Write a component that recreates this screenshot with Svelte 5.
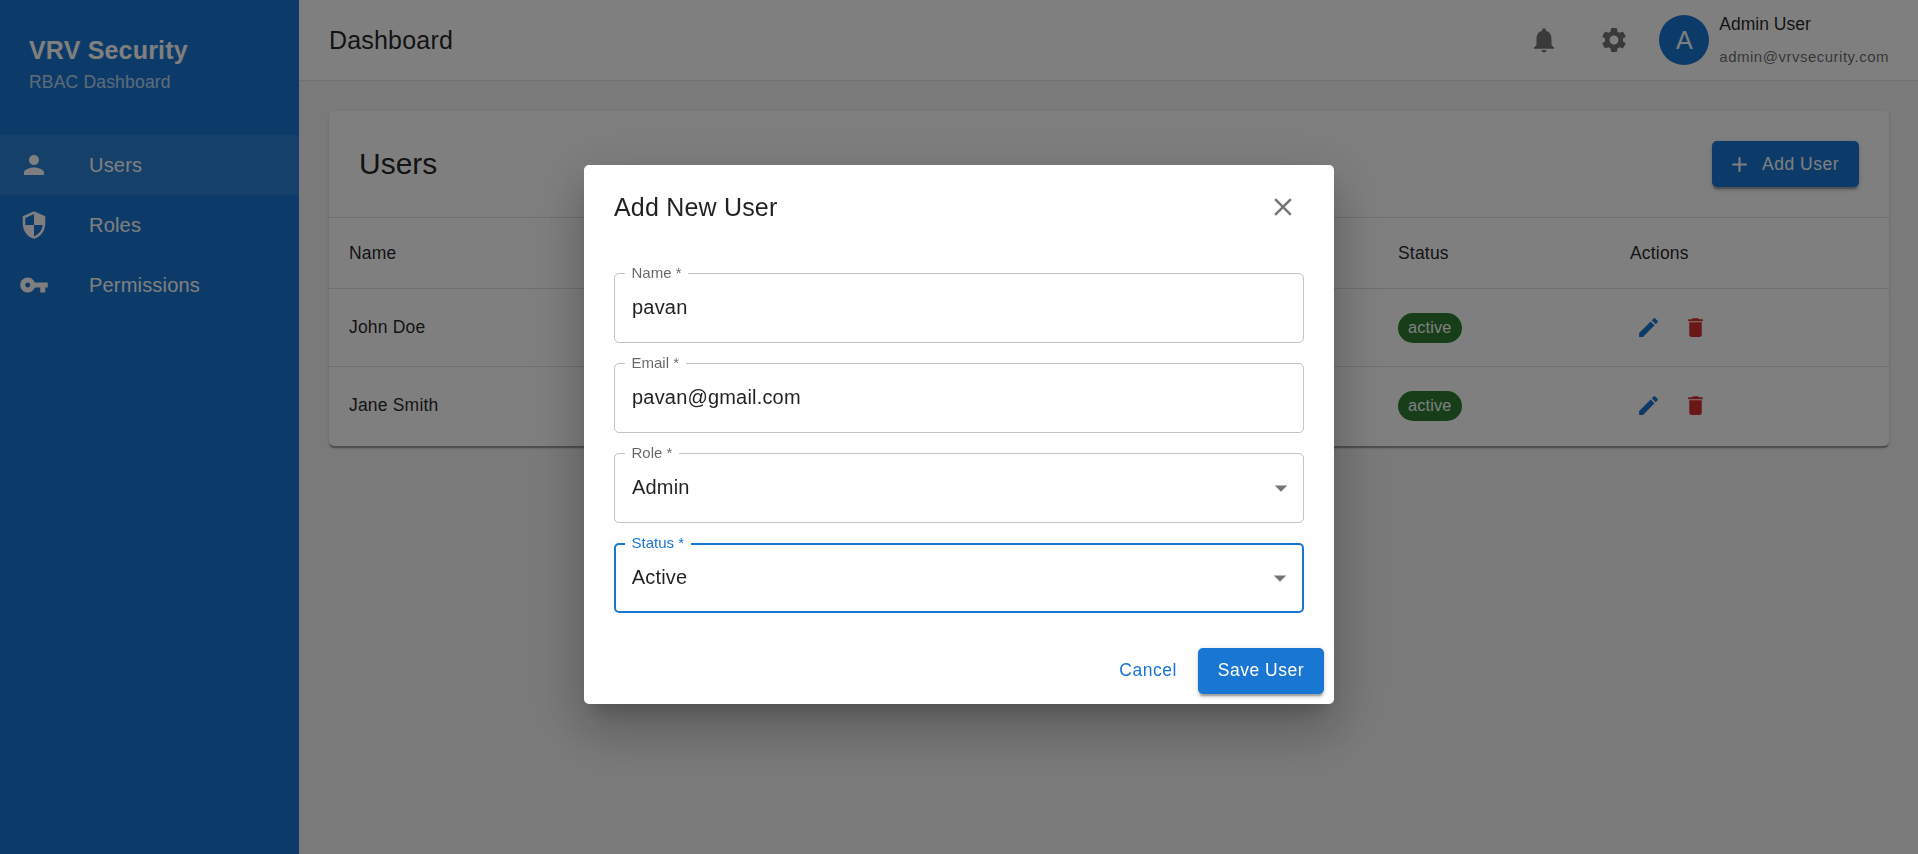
<script>
  const nav = [
    { label: 'Users', d: 'M12 12c2.21 0 4-1.79 4-4s-1.79-4-4-4-4 1.79-4 4 1.79 4 4 4zm0 2c-2.67 0-8 1.34-8 4v2h16v-2c0-2.66-5.33-4-8-4z', active: true },
    { label: 'Roles', d: 'M12 1L3 5v6c0 5.55 3.84 10.74 9 12 5.16-1.26 9-6.45 9-12V5l-9-4zm0 10.99h7c-.53 4.12-3.28 7.79-7 8.94V12H5V6.3l7-3.11v8.8z' },
    { label: 'Permissions', d: 'M12.65 10C11.83 7.67 9.61 6 7 6c-3.31 0-6 2.69-6 6s2.69 6 6 6c2.61 0 4.83-1.67 5.65-4H17v4h4v-4h2v-4H12.65zM7 14c-1.1 0-2-.9-2-2s.9-2 2-2 2 .9 2 2-.9 2-2 2z' }
  ];

  const users = [
    { name: 'John Doe', email: 'john@example.com', role: 'Admin', status: 'active' },
    { name: 'Jane Smith', email: 'jane@example.com', role: 'Editor', status: 'active' }
  ];

  const fields = [
    { label: 'Name *', value: 'pavan' },
    { label: 'Email *', value: 'pavan@gmail.com' },
    { label: 'Role *', value: 'Admin', select: true },
    { label: 'Status *', value: 'Active', select: true, focused: true }
  ];

  const icons = {
    bell: 'M12 22c1.1 0 2-.9 2-2h-4c0 1.1.89 2 2 2zm6-6v-5c0-3.07-1.64-5.64-4.5-6.32V4c0-.83-.67-1.5-1.5-1.5s-1.5.67-1.5 1.5v.68C7.63 5.36 6 7.92 6 11v5l-2 2v1h16v-1l-2-2z',
    gear: 'M19.14 12.94c.04-.3.06-.61.06-.94 0-.32-.02-.64-.07-.94l2.03-1.58c.18-.14.23-.41.12-.61l-1.92-3.32c-.12-.22-.37-.29-.59-.22l-2.39.96c-.5-.38-1.03-.7-1.62-.94l-.36-2.54c-.04-.24-.24-.41-.48-.41h-3.84c-.24 0-.43.17-.47.41l-.36 2.54c-.59.24-1.13.57-1.62.94l-2.39-.96c-.22-.08-.47 0-.59.22L2.74 8.87c-.12.21-.08.47.12.61l2.03 1.58c-.05.3-.09.63-.09.94s.02.64.07.94l-2.03 1.58c-.18.14-.23.41-.12.61l1.92 3.32c.12.22.37.29.59.22l2.39-.96c.5.38 1.03.7 1.62.94l.36 2.54c.05.24.24.41.48.41h3.84c.24 0 .44-.17.47-.41l.36-2.54c.59-.24 1.13-.56 1.62-.94l2.39.96c.22.08.47 0 .59-.22l1.92-3.32c.12-.22.07-.47-.12-.61l-2.01-1.58zM12 15.6c-1.98 0-3.6-1.62-3.6-3.6s1.62-3.6 3.6-3.6 3.6 1.62 3.6 3.6-1.62 3.6-3.6 3.6z',
    add: 'M19 13h-6v6h-2v-6H5v-2h6V5h2v6h6v2z',
    edit: 'M3 17.25V21h3.75L17.81 9.94l-3.75-3.75L3 17.25zM20.71 7.04c.39-.39.39-1.02 0-1.41l-2.34-2.34a.9959.9959 0 0 0-1.41 0l-1.83 1.83 3.75 3.75 1.83-1.83z',
    trash: 'M6 19c0 1.1.9 2 2 2h8c1.1 0 2-.9 2-2V7H6v12zM19 4h-3.5l-1-1h-5l-1 1H5v2h14V4z',
    close: 'M19 6.41 17.59 5 12 10.59 6.41 5 5 6.41 10.59 12 5 17.59 6.41 19 12 13.41 17.59 19 19 17.59 13.41 12z',
    arrow: 'M7 10l5 5 5-5z'
  };
</script>

<div class="app">
  <aside class="sidebar">
    <div class="brand">
      <div class="brand-name">VRV Security</div>
      <div class="brand-sub">RBAC Dashboard</div>
    </div>
    <nav class="nav">
      {#each nav as item}
        <div class="nav-item" class:active={item.active}>
          <span class="nav-icon"><svg viewBox="0 0 24 24" width="30" height="30"><path d={item.d} /></svg></span>
          <span>{item.label}</span>
        </div>
      {/each}
    </nav>
  </aside>

  <div class="main">
    <header class="topbar">
      <div class="page-title">Dashboard</div>
      <div class="top-actions">
        <button class="icon-btn"><svg viewBox="0 0 24 24" width="30" height="30"><path d={icons.bell} /></svg></button>
        <button class="icon-btn"><svg viewBox="0 0 24 24" width="30" height="30"><path d={icons.gear} /></svg></button>
        <div class="account">
          <div class="avatar">A</div>
          <div class="account-text">
            <div class="account-name">Admin User</div>
            <div class="account-mail">admin@vrvsecurity.com</div>
          </div>
        </div>
      </div>
    </header>

    <main class="content">
      <section class="card">
        <div class="card-head">
          <h2>Users</h2>
          <button class="btn primary add">
            <svg viewBox="0 0 24 24" width="25" height="25"><path d={icons.add} /></svg>
            Add User
          </button>
        </div>
        <table>
          <colgroup>
            <col class="c-name" /><col class="c-email" /><col class="c-role" /><col class="c-status" /><col />
          </colgroup>
          <thead>
            <tr><th>Name</th><th>Email</th><th>Role</th><th>Status</th><th>Actions</th></tr>
          </thead>
          <tbody>
            {#each users as u}
              <tr>
                <td>{u.name}</td>
                <td>{u.email}</td>
                <td>{u.role}</td>
                <td><span class="chip">{u.status}</span></td>
                <td>
                  <div class="row-actions">
                    <button class="row-btn edit"><svg viewBox="0 0 24 24" width="25" height="25"><path d={icons.edit} /></svg></button>
                    <button class="row-btn trash"><svg viewBox="0 0 24 24" width="25" height="25"><path d={icons.trash} /></svg></button>
                  </div>
                </td>
              </tr>
            {/each}
          </tbody>
        </table>
      </section>
    </main>
  </div>
</div>

<div class="backdrop">
  <div class="dialog">
    <div class="dialog-head">
      <div class="dialog-title">Add New User</div>
      <button class="close"><svg viewBox="0 0 24 24" width="30" height="30"><path d={icons.close} /></svg></button>
    </div>
    <div class="form">
      {#each fields as f}
        <div class="field" class:focused={f.focused}>
          <span class="field-label">{f.label}</span>
          <span class="field-value">{f.value}</span>
          {#if f.select}
            <svg class="caret" viewBox="0 0 24 24" width="30" height="30"><path d={icons.arrow} /></svg>
          {/if}
        </div>
      {/each}
    </div>
    <div class="dialog-actions">
      <button class="btn text">Cancel</button>
      <button class="btn primary">Save User</button>
    </div>
  </div>
</div>

<style>
  :global(body) {
    margin: 0;
    font-family: "Liberation Sans", Arial, sans-serif;
    color: rgba(0, 0, 0, 0.87);
    overflow: hidden;
  }

  button {
    font-family: inherit;
    border: none;
    background: none;
    padding: 0;
  }

  svg {
    display: block;
    fill: currentColor;
  }

  .app {
    display: flex;
    height: 854px;
    background: #f5f5f5;
  }

  /* sidebar */
  .sidebar {
    flex: 0 0 299px;
    background: #1976d2;
    color: #fff;
  }

  .brand {
    padding: 30px 30px 30px 29px;
  }

  .brand-name {
    font-size: 25px;
    font-weight: 700;
    line-height: 40px;
    letter-spacing: 0.19px;
  }

  .brand-sub {
    font-size: 17.5px;
    line-height: 25px;
    letter-spacing: 0.19px;
    opacity: 0.7;
  }

  .nav {
    padding-top: 10px;
  }

  .nav-item {
    display: flex;
    align-items: center;
    height: 60px;
    padding-left: 19px;
    font-size: 20px;
    letter-spacing: 0.19px;
  }

  .nav-item.active {
    background: rgba(255, 255, 255, 0.08);
  }

  .nav-icon {
    flex: 0 0 70px;
  }

  /* top bar */
  .main {
    flex: 1;
    min-width: 0;
  }

  .topbar {
    display: flex;
    align-items: center;
    justify-content: space-between;
    box-sizing: border-box;
    height: 81px;
    padding: 0 29px 0 30px;
    background: #fff;
    border-bottom: 1px solid rgba(0, 0, 0, 0.12);
  }

  .page-title {
    font-size: 25px;
    letter-spacing: 0.19px;
  }

  .top-actions {
    display: flex;
    align-items: center;
    gap: 20px;
  }

  .icon-btn {
    display: flex;
    align-items: center;
    justify-content: center;
    width: 50px;
    height: 50px;
    color: rgba(0, 0, 0, 0.54);
  }

  .account {
    display: flex;
    align-items: center;
    gap: 10px;
  }

  .avatar {
    display: flex;
    align-items: center;
    justify-content: center;
    width: 50px;
    height: 50px;
    border-radius: 50%;
    background: #1976d2;
    color: #fff;
    font-size: 25px;
  }

  .account-text {
    display: flex;
    flex-direction: column;
    gap: 6px;
  }

  .account-name {
    font-size: 17.5px;
    line-height: 27px;
  }

  .account-mail {
    font-size: 15px;
    line-height: 25px;
    letter-spacing: 0.5px;
    color: rgba(0, 0, 0, 0.6);
  }

  /* users card */
  .content {
    padding: 30px 29px 30px 30px;
  }

  .card {
    background: #fff;
    border-radius: 5px;
    overflow: hidden;
    box-shadow: 0 2.5px 1.25px -1.25px rgba(0, 0, 0, 0.2), 0 1.25px 1.25px rgba(0, 0, 0, 0.14), 0 1.25px 3.75px rgba(0, 0, 0, 0.12);
  }

  .card-head {
    display: flex;
    align-items: center;
    justify-content: space-between;
    padding: 30px;
    border-bottom: 1px solid rgba(0, 0, 0, 0.12);
  }

  h2 {
    margin: 0;
    font-size: 30px;
    font-weight: 400;
  }

  table {
    width: 100%;
    table-layout: fixed;
    border-collapse: collapse;
    font-size: 17.5px;
    letter-spacing: 0.19px;
  }

  .c-name { width: 320px; }
  .c-email { width: 450px; }
  .c-role { width: 279px; }
  .c-status { width: 232px; }

  th {
    height: 70px;
    padding: 0 20px;
    text-align: left;
    font-weight: 400;
    border-bottom: 1px solid rgba(0, 0, 0, 0.12);
  }

  td {
    height: 77px;
    padding: 0 20px;
    border-bottom: 1px solid rgba(0, 0, 0, 0.12);
  }

  tbody tr:last-child td {
    height: 77px;
    padding-bottom: 2px;
    border-bottom: none;
  }

  .chip {
    display: inline-flex;
    align-items: center;
    height: 30px;
    padding: 0 10px;
    border-radius: 15px;
    background: #2e7d32;
    color: #fff;
    font-size: 16.25px;
    vertical-align: middle;
  }

  .row-actions {
    display: flex;
    gap: 9px;
  }

  .row-btn {
    padding: 6.25px;
  }

  .row-btn.edit { color: #1976d2; }
  .row-btn.trash { color: #d32f2f; }

  /* buttons */
  .btn {
    display: inline-flex;
    align-items: center;
    box-sizing: border-box;
    height: 46px;
    padding: 0 20px;
    border-radius: 5px;
    font-size: 17.5px;
    letter-spacing: 0.5px;
  }

  .btn.primary {
    background: #1976d2;
    color: #fff;
    box-shadow: 0 3.75px 1.25px -2.5px rgba(0, 0, 0, 0.2), 0 2.5px 2.5px rgba(0, 0, 0, 0.14), 0 1.25px 6.25px rgba(0, 0, 0, 0.12);
  }

  .btn.add svg {
    margin: 0 10px 0 -5px;
  }

  .btn.text {
    padding: 0 10px;
    color: #1976d2;
  }

  /* modal */
  .backdrop {
    position: fixed;
    inset: 0;
    display: flex;
    align-items: flex-start;
    justify-content: center;
    background: rgba(0, 0, 0, 0.5);
  }

  .dialog {
    box-sizing: border-box;
    width: 750px;
    height: 539px;
    margin-top: 165px;
    background: #fff;
    border-radius: 5px;
    box-shadow: 0 14px 19px -9px rgba(0, 0, 0, 0.2), 0 30px 48px 3px rgba(0, 0, 0, 0.14), 0 11px 57px 10px rgba(0, 0, 0, 0.12);
  }

  .dialog-head {
    display: flex;
    align-items: center;
    justify-content: space-between;
    height: 40px;
    padding: 22px 26px 0 30px;
  }

  .dialog-title {
    font-size: 25px;
    letter-spacing: 0.19px;
  }

  .close {
    display: flex;
    align-items: center;
    justify-content: center;
    width: 50px;
    height: 50px;
    color: rgba(0, 0, 0, 0.54);
  }

  .form {
    display: grid;
    gap: 20.5px;
    padding: 46px 30px 0;
  }

  .field {
    position: relative;
    display: flex;
    align-items: center;
    box-sizing: border-box;
    height: 69.5px;
    padding: 0 17px;
    border: 1.25px solid rgba(0, 0, 0, 0.23);
    border-radius: 5px;
  }

  .field.focused {
    padding: 0 15.75px;
    border: 2.5px solid #1976d2;
  }

  .field-label {
    position: absolute;
    top: -9px;
    left: 10px;
    padding: 0 6.5px;
    background: #fff;
    font-size: 15px;
    line-height: 16px;
    color: rgba(0, 0, 0, 0.6);
  }

  .field.focused .field-label {
    top: -10px;
    left: 9px;
    color: #1976d2;
  }

  .field-value {
    font-size: 20px;
    letter-spacing: 0.19px;
  }

  .caret {
    position: absolute;
    right: 7.5px;
    top: 50%;
    margin-top: -15px;
    color: rgba(0, 0, 0, 0.54);
  }

  .dialog-actions {
    display: flex;
    justify-content: flex-end;
    gap: 11px;
    padding: 35px 10px 0;
  }
</style>
